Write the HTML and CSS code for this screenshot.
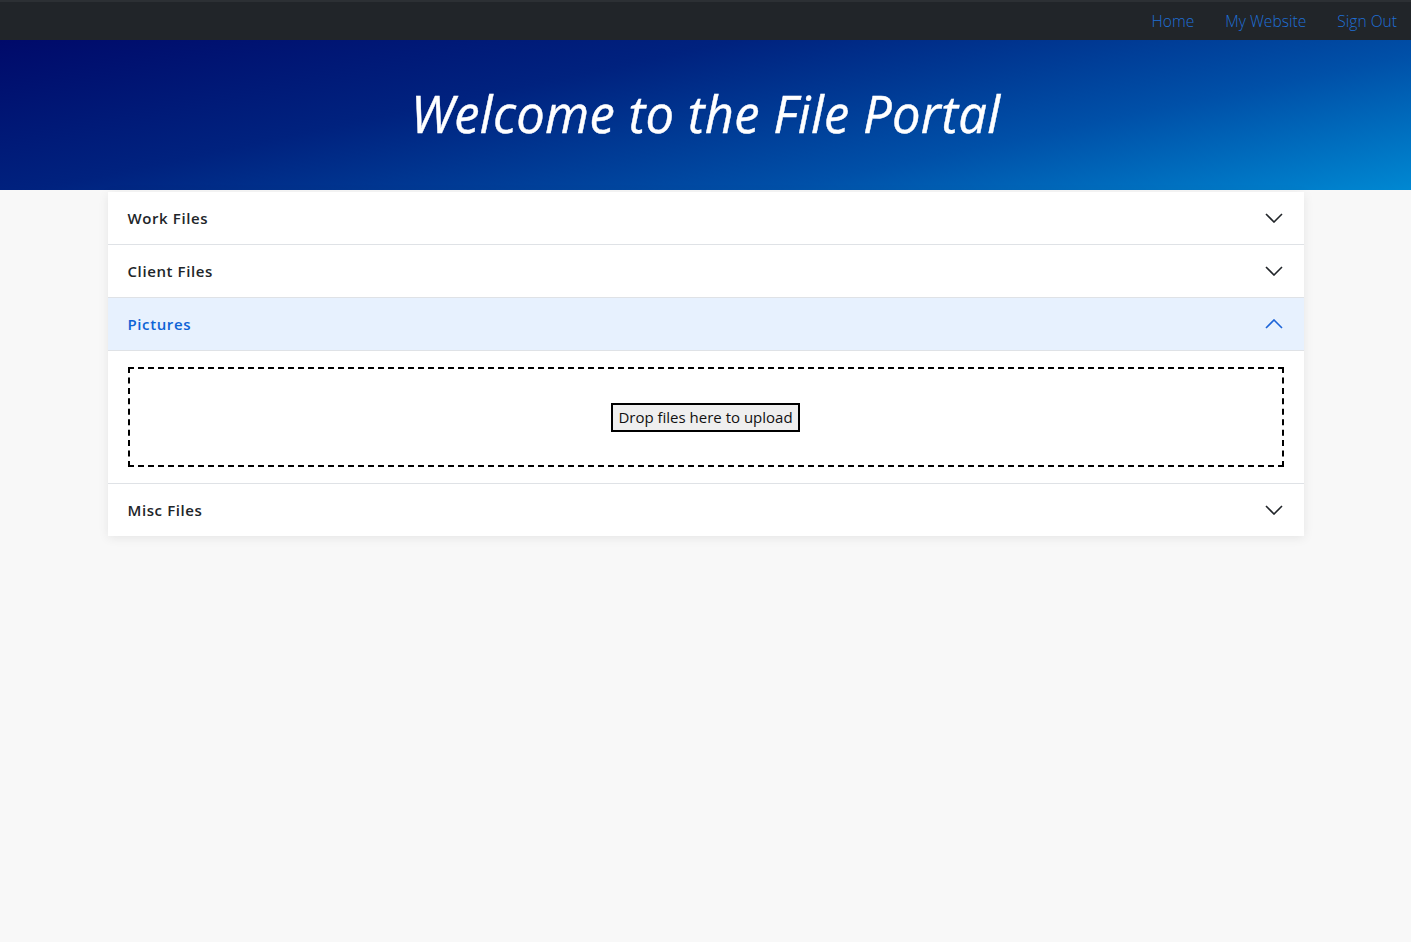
FILE: index.html
```html
<!DOCTYPE html>
<html>
<head>
<meta charset="utf-8">
<title>File Portal</title>
<link rel="stylesheet" href="styles.css">
</head>
<body>
<nav class="topnav">
  <a href="#" class="navlink">Home</a>
  <a href="#" class="navlink">My Website</a>
  <a href="#" class="navlink">Sign Out</a>
</nav>
<header class="hero">
  <h1 class="hero-title">Welcome to the File Portal</h1>
</header>
<main class="accordion">
  <div class="acc-item">
    <div class="acc-head">
      <span class="acc-title">Work Files</span>
      <svg class="chev" width="18" height="10" viewBox="0 0 18 10"><path d="M1 1 L9 9 L17 1" fill="none" stroke="#212529" stroke-width="1.6"/></svg>
    </div>
  </div>
  <div class="acc-item">
    <div class="acc-head">
      <span class="acc-title">Client Files</span>
      <svg class="chev" width="18" height="10" viewBox="0 0 18 10"><path d="M1 1 L9 9 L17 1" fill="none" stroke="#212529" stroke-width="1.6"/></svg>
    </div>
  </div>
  <div class="acc-item">
    <div class="acc-head active">
      <span class="acc-title">Pictures</span>
      <svg class="chev" width="18" height="10" viewBox="0 0 18 10"><path d="M1 9 L9 1 L17 9" fill="none" stroke="#1c64d8" stroke-width="1.6"/></svg>
    </div>
    <div class="acc-body">
      <div class="dropzone">
        <button class="drop-btn">Drop files here to upload</button>
      </div>
    </div>
  </div>
  <div class="acc-item last">
    <div class="acc-head">
      <span class="acc-title">Misc Files</span>
      <svg class="chev" width="18" height="10" viewBox="0 0 18 10"><path d="M1 1 L9 9 L17 1" fill="none" stroke="#212529" stroke-width="1.6"/></svg>
    </div>
  </div>
</main>
</body>
</html>
```
FILE: styles.css
```css
* { box-sizing: border-box; }
html, body { margin: 0; padding: 0; }
body {
  background: #f8f8f8;
  font-family: "Open Sans", "Noto Sans", sans-serif;
  color: #212529;
  min-height: 942px;
}
.topnav {
  height: 40px;
  background: #212529;
  border-top: 2px solid #2c3034;
  display: flex;
  justify-content: flex-end;
  align-items: center;
  gap: 31px;
  padding-right: 14px;
}
.navlink {
  color: #1f6fd6;
  text-decoration: none;
  font-size: 15.6px;
  font-weight: 300;
  padding-bottom: 1px;
}
.hero {
  height: 150px;
  background: linear-gradient(168deg, #000a6a 0%, #00227f 35%, #0050a8 70%, #0088d2 100%);
  display: flex;
  justify-content: center;
  align-items: center;
}
.hero-title {
  margin: 0;
  color: #fff;
  font-style: italic;
  font-weight: 400;
  font-size: 50.7px;
  letter-spacing: 0.3px;
  padding-bottom: 4px;
  -webkit-text-stroke: 0.4px #fff;
}
.accordion {
  width: 1196px;
  margin: 2px auto 0;
  background: #fff;
  box-shadow: 0 2px 10px rgba(0,0,0,0.08);
}
.acc-item { border-bottom: 1px solid #dfe2e6; }
.acc-item.last { border-bottom: none; }
.acc-head {
  height: 52px;
  display: flex;
  align-items: center;
  justify-content: space-between;
  padding: 0 21px 0 20px;
}
.acc-head.active {
  background: #e7f1fe;
  border-bottom: 1px solid #dfe2e6;
  height: 53px;
}
.acc-title {
  font-size: 15px;
  font-weight: 600;
  letter-spacing: 0.6px;
  color: #212529;
}
.active .acc-title { color: #0d63d6; }
.chev { display: block; }
.acc-body { padding: 16px 20px 16px 20px; }
.dropzone {
  height: 100px;
  border: 2px dashed #000;
  display: flex;
  justify-content: center;
  align-items: center;
}
.drop-btn {
  font-family: "Open Sans", "Noto Sans", sans-serif;
  font-size: 15px;
  font-weight: 400;
  color: #111;
  background: #efefef;
  border: 2px solid #000;
  padding: 1px 5px;
  height: 29px;
}
```
